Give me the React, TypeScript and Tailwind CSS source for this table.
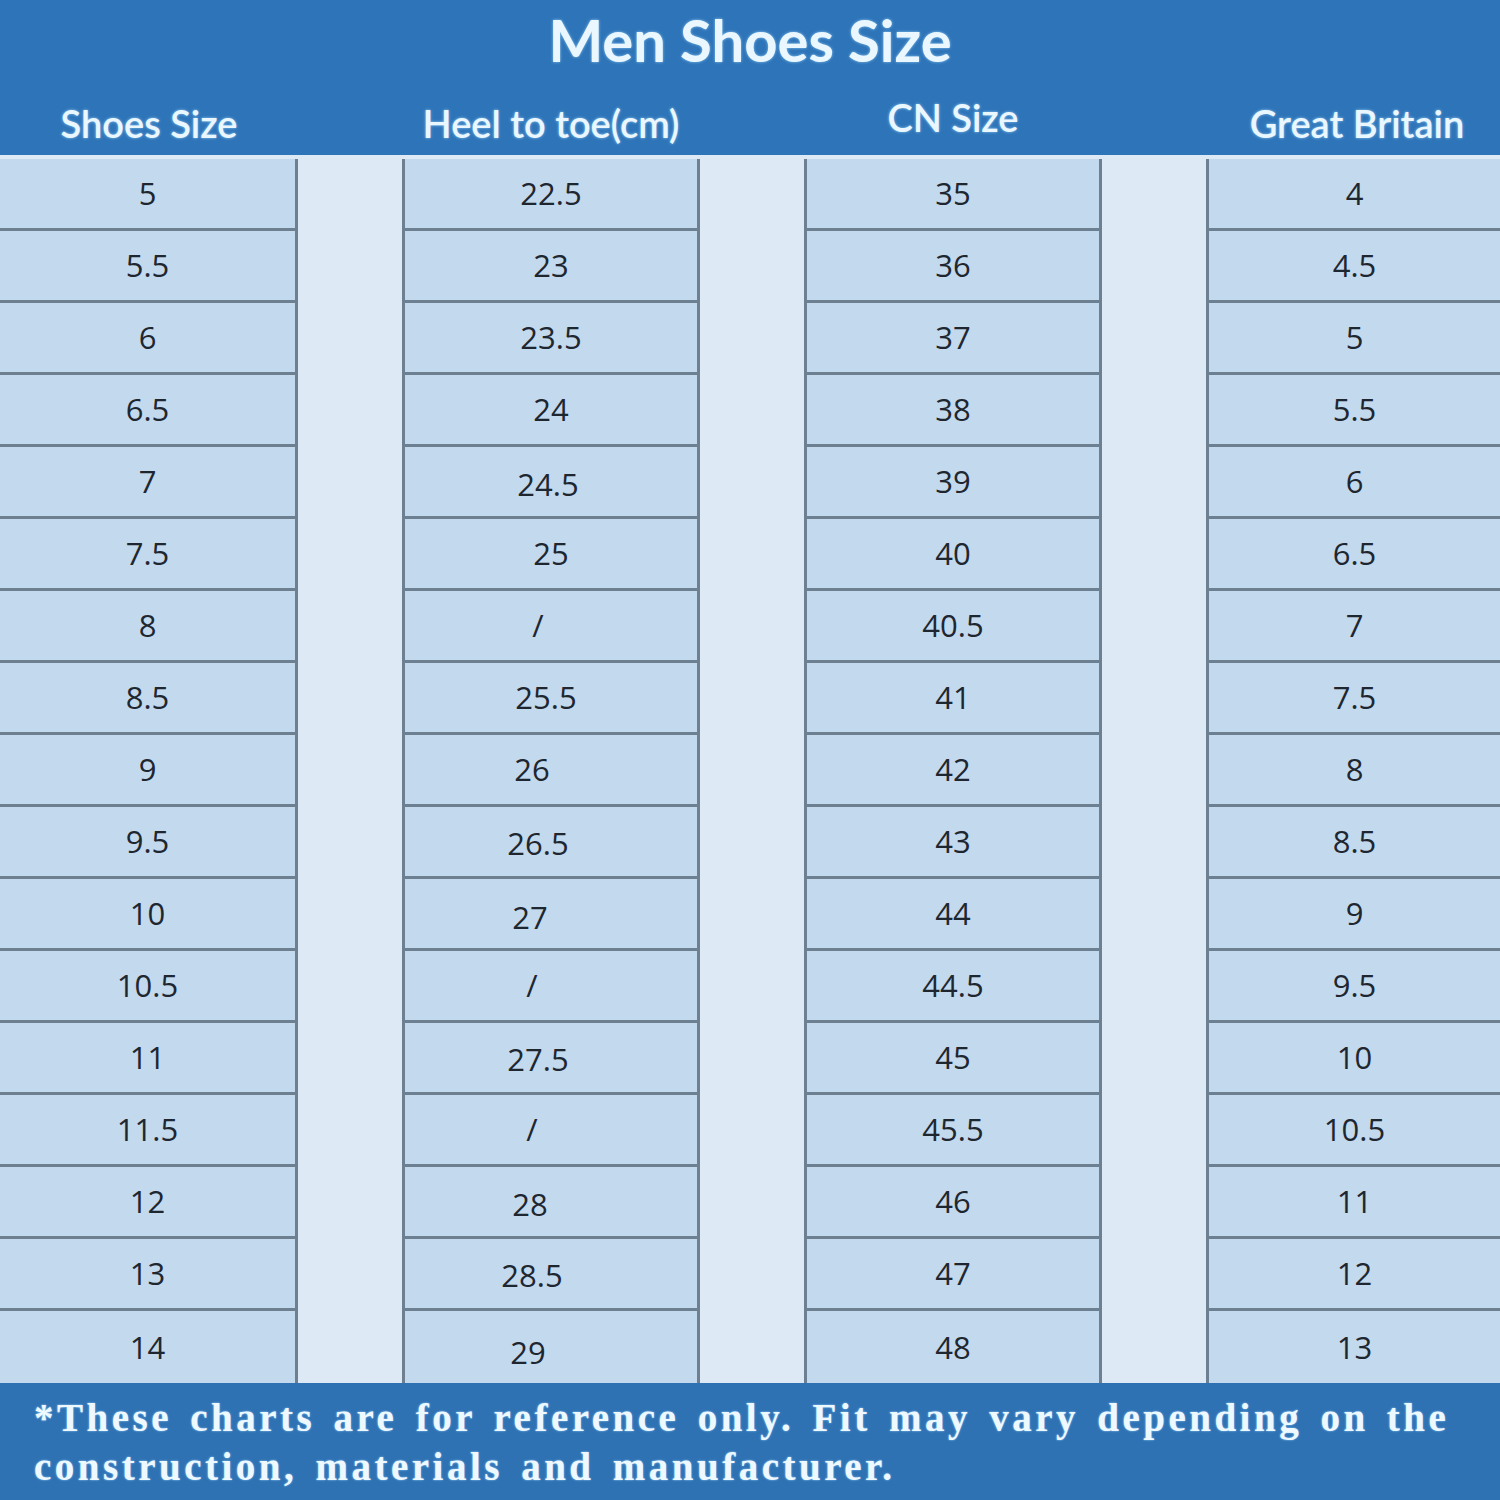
const rows = [
  { us: '5', cm: '22.5', cmCls: '', cn: '35', gb: '4' },
  { us: '5.5', cm: '23', cmCls: '', cn: '36', gb: '4.5' },
  { us: '6', cm: '23.5', cmCls: '', cn: '37', gb: '5' },
  { us: '6.5', cm: '24', cmCls: '', cn: '38', gb: '5.5' },
  { us: '7', cm: '24.5', cmCls: 'pr-[6px] pt-[6px]', cn: '39', gb: '6' },
  { us: '7.5', cm: '25', cmCls: '', cn: '40', gb: '6.5' },
  { us: '8', cm: '/', cmCls: 'pr-[26px]', cn: '40.5', gb: '7' },
  { us: '8.5', cm: '25.5', cmCls: 'pr-[10px]', cn: '41', gb: '7.5' },
  { us: '9', cm: '26', cmCls: 'pr-[38px]', cn: '42', gb: '8' },
  { us: '9.5', cm: '26.5', cmCls: 'pr-[26px] pt-[4px]', cn: '43', gb: '8.5' },
  { us: '10', cm: '27', cmCls: 'pr-[42px] pt-[8px]', cn: '44', gb: '9' },
  { us: '10.5', cm: '/', cmCls: 'pr-[38px]', cn: '44.5', gb: '9.5' },
  { us: '11', cm: '27.5', cmCls: 'pr-[26px] pt-[4px]', cn: '45', gb: '10' },
  { us: '11.5', cm: '/', cmCls: 'pr-[38px]', cn: '45.5', gb: '10.5' },
  { us: '12', cm: '28', cmCls: 'pr-[42px] pt-[6px]', cn: '46', gb: '11' },
  { us: '13', cm: '28.5', cmCls: 'pr-[38px] pt-[4px]', cn: '47', gb: '12' },
  { us: '14', cm: '29', cmCls: 'pr-[46px] pt-[10px]', cn: '48', gb: '13' },
]

function Cell({ value, last, extra = '' }: { value: string; last: boolean; extra?: string }) {
  return (
    <div
      className={
        'flex h-[72px] items-center justify-center bg-[#c3d9ee] text-[31px] text-[#1e2730] ' +
        (last ? '' : 'border-b-[3px] border-[#6c8092] ') +
        extra
      }
    >
      {value}
    </div>
  )
}

function DataColumn({
  values,
  width,
  borders,
  extras,
}: {
  values: string[]
  width: string
  borders: string
  extras?: string[]
}) {
  return (
    <div className={'flex flex-col border-[#6c8092] ' + width + ' ' + borders}>
      {values.map((v, i) => (
        <Cell key={i} value={v} last={i === values.length - 1} extra={extras ? extras[i] : ''} />
      ))}
    </div>
  )
}

function Spacer() {
  return <div className="w-[104px] bg-[#dde9f5]" />
}

export default function App() {
  return (
    <div className="w-[1500px] h-[1500px] flex flex-col bg-[#dde9f5] font-['Open_Sans',sans-serif] overflow-hidden">
      <header className="h-[155px] bg-[#2e74b8] flex flex-col text-[#eaf7ff] [text-shadow:0_0_3px_#8fcaf5] font-['Lato',sans-serif]">
        <h1 className="h-[84px] flex items-center justify-center pb-[6px] text-[58px] font-bold">
          Men Shoes Size
        </h1>
        <div className="flex flex-1 items-center text-[38px] font-semibold pt-[8px]">
          <div className="w-[298px] flex justify-center">Shoes Size</div>
          <div className="w-[104px]" />
          <div className="w-[298px] flex justify-center">Heel to toe(cm)</div>
          <div className="w-[104px]" />
          <div className="w-[298px] flex justify-center -mt-[12px]">CN Size</div>
          <div className="w-[104px]" />
          <div className="flex-1 flex justify-center pl-[8px]">Great Britain</div>
        </div>
      </header>

      <div className="flex pt-[4px]">
        <DataColumn values={rows.map((r) => r.us)} width="w-[298px]" borders="border-r-[3px]" />
        <Spacer />
        <DataColumn
          values={rows.map((r) => r.cm)}
          width="w-[298px]"
          borders="border-x-[3px]"
          extras={rows.map((r) => r.cmCls)}
        />
        <Spacer />
        <DataColumn values={rows.map((r) => r.cn)} width="w-[298px]" borders="border-x-[3px]" />
        <Spacer />
        <DataColumn values={rows.map((r) => r.gb)} width="flex-1" borders="border-l-[3px]" />
      </div>

      <footer className="flex-1 bg-[#2f72b4] px-[34px] pt-[10px] font-['Liberation_Serif',serif] font-bold text-[39px] leading-[49px] tracking-[3.5px] [word-spacing:5px] text-[#eef9ff] [text-shadow:0_0_2px_#9fd6ff]">
        <p className="whitespace-nowrap">
          *These charts are for reference only. Fit may vary depending on the
        </p>
        <p className="whitespace-nowrap">construction, materials and manufacturer.</p>
      </footer>
    </div>
  )
}
